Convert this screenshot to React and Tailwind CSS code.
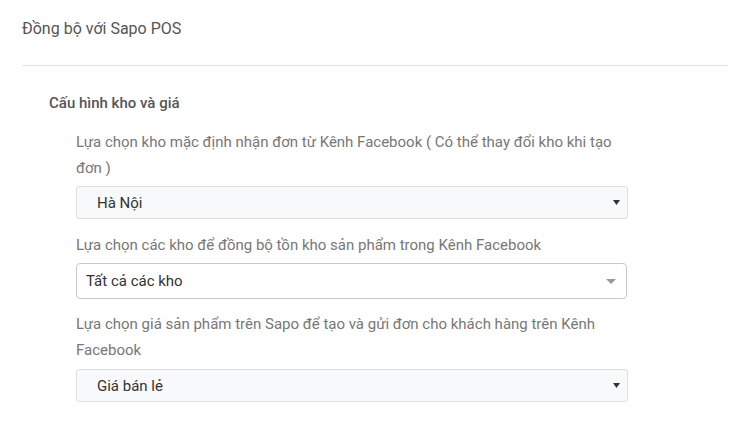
import React from 'react';

const font = { fontFamily: 'Roboto, "Noto Sans", sans-serif' };

const SmallArrow = () => (
    <svg width="7" height="5" viewBox="0 0 7 5" className="shrink-0">
        <path d="M0 0 L7 0 L3.5 5 Z" fill="#333" />
    </svg>
);

const Select2Arrow = () => (
    <svg width="10" height="5" viewBox="0 0 10 5" className="shrink-0">
        <path d="M0 0 L10 0 L5 5 Z" fill="#999" />
    </svg>
);

const NativeSelect = ({ value }) => (
    <div className="flex items-center justify-between h-[33px] w-[552px] pl-5 pr-[7px] bg-[#f8f9fa] border border-[#dedede] rounded-[3px] text-[15px] text-[#333]">
        <span>{value}</span>
        <SmallArrow />
    </div>
);

const Select2 = ({ value }) => (
    <div className="flex items-center justify-between h-[36px] w-[551px] pl-[9px] pr-[10px] bg-white border border-[#c8c8c8] rounded-[4px] text-[15px] text-[#333]">
        <span>{value}</span>
        <Select2Arrow />
    </div>
);

const App = () => {
    return (
        <div className="w-[750px] h-[422px] bg-white px-[22px] overflow-hidden" style={font}>
            <div className="pt-[18px] pb-[25px] border-b border-[#e4e4e4]">
                <h2 className="text-base leading-[22px] font-normal text-[#555]">Đồng bộ với Sapo POS</h2>
            </div>

            <div className="pl-[27px] pt-[27px]">
                <h3 className="text-[15px] leading-5 font-medium text-[#555]">Cấu hình kho và giá</h3>

                <div className="pl-[27px] pt-4 text-[15px] leading-[26px] text-[#777]">
                    <p className="w-[552px]">
                        Lựa chọn kho mặc định nhận đơn từ Kênh Facebook ( Có thể thay đổi kho khi tạo đơn )
                    </p>
                    <div className="mt-[5px]">
                        <NativeSelect value="Hà Nội" />
                    </div>

                    <p className="mt-[13px] w-[552px]">Lựa chọn các kho để đồng bộ tồn kho sản phẩm trong Kênh Facebook</p>
                    <div className="mt-[5px]">
                        <Select2 value="Tất cả các kho" />
                    </div>

                    <p className="mt-3 w-[552px]">
                        Lựa chọn giá sản phẩm trên Sapo để tạo và gửi đơn cho khách hàng trên Kênh Facebook
                    </p>
                    <div className="mt-[6px]">
                        <NativeSelect value="Giá bán lẻ" />
                    </div>
                </div>
            </div>
        </div>
    );
};

export default App;
